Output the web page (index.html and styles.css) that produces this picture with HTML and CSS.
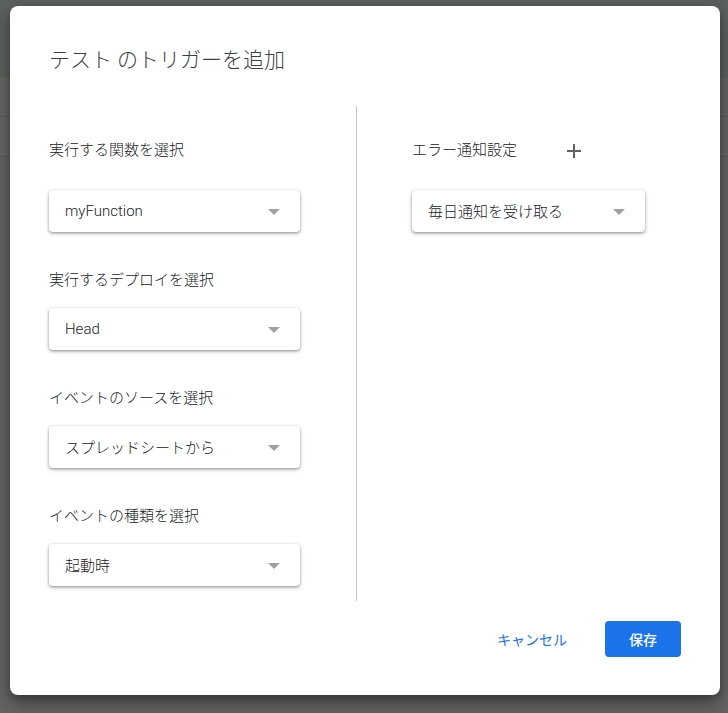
FILE: index.html
```html
<!DOCTYPE html>
<html lang="ja">
<head>
<meta charset="utf-8">
<title>テスト のトリガーを追加</title>
<link rel="stylesheet" href="styles.css">
</head>
<body>
<div class="page">
  <div class="page-top"></div>
  <div class="page-row"></div>
  <div class="page-row"></div>
  <div class="page-rest"></div>
</div>

<div class="dialog" role="dialog">
  <h1 class="title">テスト のトリガーを追加</h1>
  <div class="body">
    <div class="col col-left">
      <div class="field">
        <div class="label-row label-row-first"><span class="label">実行する関数を選択</span></div>
        <div class="select"><span class="select-text">myFunction</span><span class="arrow"></span></div>
      </div>
      <div class="field">
        <div class="label-row"><span class="label">実行するデプロイを選択</span></div>
        <div class="select"><span class="select-text">Head</span><span class="arrow"></span></div>
      </div>
      <div class="field">
        <div class="label-row"><span class="label">イベントのソースを選択</span></div>
        <div class="select"><span class="select-text">スプレッドシートから</span><span class="arrow"></span></div>
      </div>
      <div class="field">
        <div class="label-row"><span class="label">イベントの種類を選択</span></div>
        <div class="select"><span class="select-text">起動時</span><span class="arrow"></span></div>
      </div>
    </div>
    <div class="divider"></div>
    <div class="col col-right">
      <div class="field">
        <div class="label-row label-row-first">
          <span class="label">エラー通知設定</span>
          <span class="add-btn">
            <svg width="24" height="24" viewBox="0 0 24 24"><path d="M19 13h-6v6h-2v-6H5v-2h6V5h2v6h6v2z" fill="#5f6368"/></svg>
          </span>
        </div>
        <div class="select select-wide"><span class="select-text">毎日通知を受け取る</span><span class="arrow"></span></div>
      </div>
    </div>
  </div>
  <div class="footer">
    <button class="btn btn-text">キャンセル</button>
    <button class="btn btn-primary">保存</button>
  </div>
</div>
</body>
</html>
```

FILE: styles.css
```css
* { box-sizing: border-box; }
html, body { margin: 0; padding: 0; }
body {
  width: 728px;
  height: 713px;
  overflow: hidden;
  font-family: Roboto, "Noto Sans CJK JP", sans-serif;
  background: #636363;
  position: relative;
}
.page { display: flex; flex-direction: column; height: 713px; }
.page-top { height: 77px; background: #5b605c; }
.page-row { height: 40px; background: #646464; border-bottom: 1px solid #5a5a5a; }
.page-rest { flex: 1; background: #636363; }

.dialog {
  position: absolute;
  left: 10px;
  top: 6px;
  width: 710px;
  height: 689px;
  background: #fff;
  border-radius: 8px;
  box-shadow: 0 4px 10px rgba(0,0,0,.35), 0 12px 20px rgba(0,0,0,.2);
  padding: 40px 39px 0 39px;
  display: flex;
  flex-direction: column;
}
.title {
  margin: 0;
  font-size: 21px;
  line-height: 28px;
  font-weight: 300;
  color: #3c4043;
}
.body {
  margin-top: 32px;
  height: 495px;
  display: flex;
}
.col-left { width: 307px; padding-top: 24px; }
.divider { width: 1px; background: #c4c4c8; }
.col-right { padding-left: 55px; padding-top: 24px; }

.field + .field { margin-top: 38px; }
.label-row {
  height: 20px;
  display: flex;
  align-items: center;
  margin-bottom: 18px;
}
.label-row-first { height: 40px; margin-bottom: 20px; }
.label {
  font-size: 15px;
  line-height: 20px;
  font-weight: 300;
  color: #202124;
}
.add-btn {
  width: 24px;
  height: 24px;
  margin-left: 45px;
  margin-top: 2px;
  display: flex;
}
.select {
  width: 251px;
  height: 42px;
  border-radius: 4px;
  background: #fff;
  box-shadow: 0 1px 3px rgba(0,0,0,.38), 0 2px 5px rgba(0,0,0,.12);
  display: flex;
  align-items: center;
  justify-content: space-between;
  padding: 0 20px 1px 16px;
}
.select-wide { width: 233px; }
.select-text {
  font-size: 15px;
  font-weight: 300;
  color: #202124;
}
.arrow {
  width: 0;
  height: 0;
  border-left: 6px solid transparent;
  border-right: 6px solid transparent;
  border-top: 6px solid #a0a0a0;
  margin-top: 3px;
}

.footer {
  margin-top: 20px;
  display: flex;
  justify-content: flex-end;
  align-items: center;
}
.btn {
  font-family: Roboto, "Noto Sans CJK JP", sans-serif;
  font-size: 14px;
  height: 36px;
  border: none;
  border-radius: 4px;
  cursor: pointer;
}
.btn-text {
  background: transparent;
  color: #1a73e8;
  padding: 0 16px;
  margin-right: 22px;
}
.btn-primary {
  background: #1a73e8;
  color: #fff;
  font-weight: 500;
  width: 76px;
  padding: 0;
}
```
